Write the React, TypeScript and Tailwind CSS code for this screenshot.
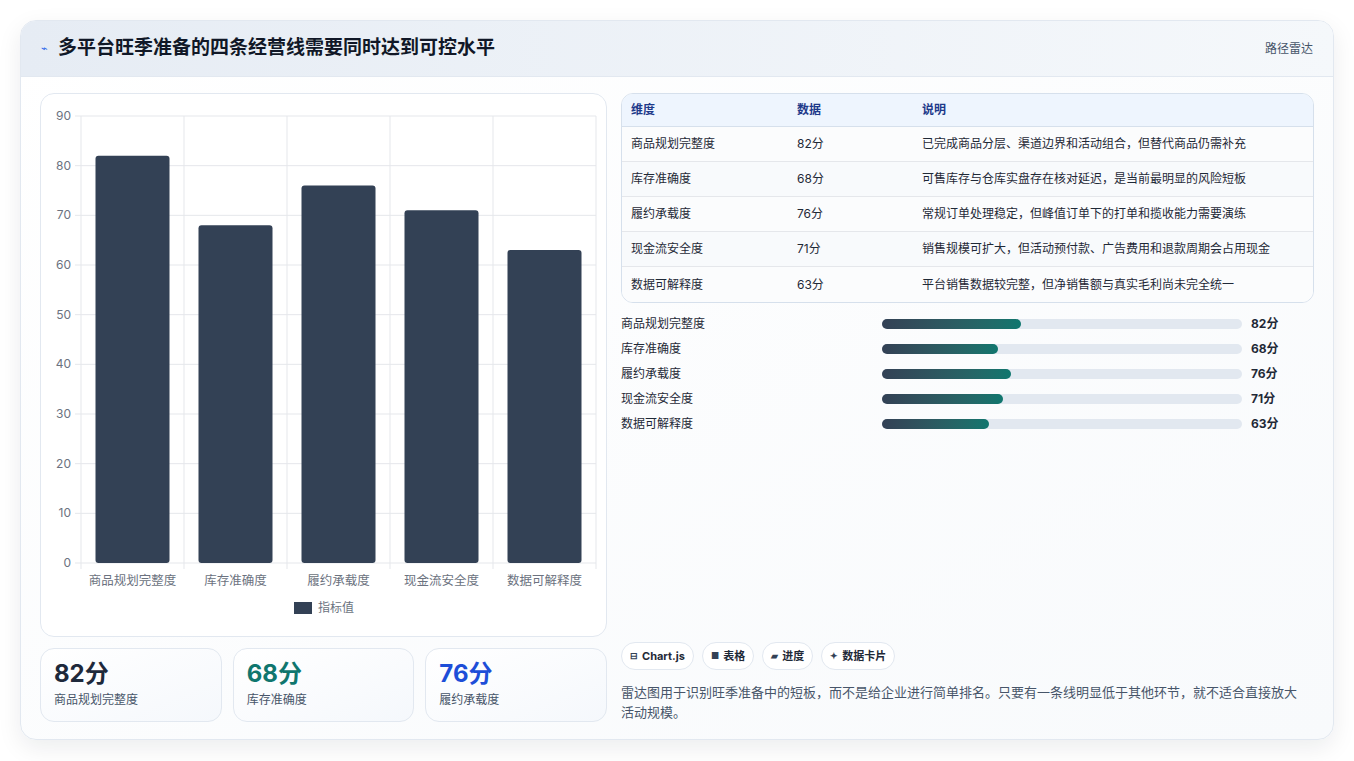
import React from "react";

const dims = [
  { n: "商品规划完整度", v: 82, d: "已完成商品分层、渠道边界和活动组合，但替代商品仍需补充" },
  { n: "库存准确度", v: 68, d: "可售库存与仓库实盘存在核对延迟，是当前最明显的风险短板" },
  { n: "履约承载度", v: 76, d: "常规订单处理稳定，但峰值订单下的打单和揽收能力需要演练" },
  { n: "现金流安全度", v: 71, d: "销售规模可扩大，但活动预付款、广告费用和退款周期会占用现金" },
  { n: "数据可解释度", v: 63, d: "平台销售数据较完整，但净销售额与真实毛利尚未完全统一" },
];

function Chart() {
  const x0 = 40, x1 = 555, yTop = 22, yBot = 469;
  const per = (yBot - yTop) / 90;
  const cw = (x1 - x0) / 5;
  return (
    <svg width="567" height="543" className="block">
      {[0, 10, 20, 30, 40, 50, 60, 70, 80, 90].map((t) => {
        const y = yBot - t * per;
        return (
          <g key={t}>
            <line x1={x0 - 6} x2={x1} y1={y} y2={y} stroke="#e5e7eb" />
            <text x={x0 - 10} y={y + 4} textAnchor="end" fontSize="12" fill="#6b7280">{t}</text>
          </g>
        );
      })}
      {[0, 1, 2, 3, 4, 5].map((i) => (
        <line key={i} x1={x0 + i * cw} x2={x0 + i * cw} y1={yTop} y2={yBot + 6} stroke="#e5e7eb" />
      ))}
      {dims.map((d, i) => {
        const cx = x0 + cw * i + cw / 2;
        const h = d.v * per;
        return (
          <g key={d.n}>
            <rect x={cx - 37} y={yBot - h} width="74" height={h} rx="3" fill="#334155" />
            <text x={cx} y={yBot + 22} textAnchor="middle" fontSize="12.5" fill="#6b7280">{d.n}</text>
          </g>
        );
      })}
      <rect x="253" y="508" width="18" height="12" fill="#334155" />
      <text x="277" y="518" fontSize="12" fill="#6b7280">指标值</text>
    </svg>
  );
}

export default function App() {
  return (
    <div className="w-[1354px] h-[761px] bg-white pt-[20px] px-[20px]" style={{ fontFamily: "Inter, 'Noto Sans CJK SC', sans-serif" }}>
      <div className="w-[1314px] h-[720px] rounded-[16px] border border-[#e2e8f0] shadow-[0_8px_24px_rgba(15,23,42,0.08)] overflow-hidden bg-gradient-to-br from-[#ffffff] to-[#f8fafc] flex flex-col">
        <div className="h-[56px] flex items-center justify-between px-[20px] bg-gradient-to-r from-[#e6ecf4] to-[#f5f8fb] border-b border-[#e2e8f0]">
          <div className="flex items-center gap-[10px]">
            <span className="text-[#2563eb] text-[11px]">⌁</span>
            <span className="text-[19px] font-bold text-[#111827]">多平台旺季准备的四条经营线需要同时达到可控水平</span>
          </div>
          <span className="text-[12px] text-[#475569]">路径雷达</span>
        </div>
        <div className="flex gap-[14px] px-[19px] pt-[16px]">
          <div className="w-[567px] flex flex-col gap-[11px]">
            <div className="h-[544px] rounded-[14px] border border-[#e2e8f0] bg-white">
              <Chart />
            </div>
            <div className="flex gap-[11px]">
              {[
                ["82分", "商品规划完整度", "text-[#1e293b]"],
                ["68分", "库存准确度", "text-[#0f766e]"],
                ["76分", "履约承载度", "text-[#1d4ed8]"],
              ].map(([a, b, c]) => (
                <div key={b} className="flex-1 h-[74px] rounded-[14px] border border-[#e2e8f0] bg-gradient-to-br from-white to-[#f5f8fc] px-[13px] pt-[10px]">
                  <div className={`text-[24px] font-bold leading-[30px] ${c}`}>{a}</div>
                  <div className="text-[12px] text-[#475569] mt-[2px]">{b}</div>
                </div>
              ))}
            </div>
          </div>
          <div className="flex-1 flex flex-col">
            <div className="rounded-[12px] border border-[#d6e0ec] overflow-hidden bg-white">
              <div className="flex h-[33px] items-center bg-[#eef5fe] border-b border-[#d6e0ec] text-[12px] font-bold text-[#1e3a8a] px-[9px]">
                <div className="w-[166px]">维度</div>
                <div className="w-[125px]">数据</div>
                <div>说明</div>
              </div>
              {dims.map((d, i) => (
                <div key={d.n} className={`flex h-[35px] items-center text-[12px] text-[#1f2937] px-[9px] ${i < 4 ? "border-b border-[#e5e7eb]" : ""} ${i % 2 ? "bg-[#f8fafc]" : "bg-[#fbfcfd]"}`}>
                  <div className="w-[166px]">{d.n}</div>
                  <div className="w-[125px]">{d.v}分</div>
                  <div>{d.d}</div>
                </div>
              ))}
            </div>
            <div className="flex flex-col gap-[7px] mt-[12px]">
              {dims.map((d) => (
                <div key={d.n} className="flex items-center h-[18px] text-[12px]">
                  <div className="w-[261px] text-[#1f2937]">{d.n}</div>
                  <div className="w-[360px] h-[10px] rounded-full bg-[#e2e8f0]">
                    <div className="h-full rounded-full bg-gradient-to-r from-[#334155] to-[#0f766e]" style={{ width: d.v * 1.7 }} />
                  </div>
                  <div className="ml-[9px] font-bold text-[#1f2937]">{d.v}分</div>
                </div>
              ))}
            </div>
            <div className="flex-1" />
            <div className="flex gap-[8px] mt-[auto]">
              {[["⊟", "Chart.js"], ["■", "表格"], ["▰", "进度"], ["✦", "数据卡片"]].map(([i, t]) => (
                <div key={t} className="h-[28px] px-[8px] rounded-full border border-[#e2e8f0] bg-white flex items-center gap-[4px] text-[11px] font-bold text-[#1f2937]">
                  <span className="text-[9px] text-[#334155]">{i}</span>{t}
                </div>
              ))}
            </div>
            <p className="mt-[12px] text-[13px] leading-[20px] text-[#475569] pr-[10px]">
              雷达图用于识别旺季准备中的短板，而不是给企业进行简单排名。只要有一条线明显低于其他环节，就不适合直接放大活动规模。
            </p>
          </div>
        </div>
      </div>
    </div>
  );
}
